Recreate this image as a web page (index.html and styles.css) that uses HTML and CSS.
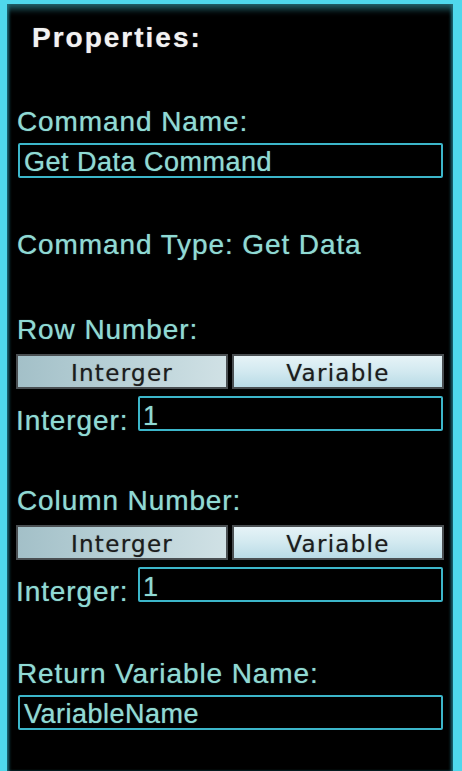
FILE: index.html
```html
<!DOCTYPE html>
<html>
<head>
<meta charset="utf-8">
<link rel="stylesheet" href="styles.css">
</head>
<body>
<div class="panel">
  <div class="title">Properties:</div>

  <div class="label l-cmdname">Command Name:</div>
  <div class="box">Get Data Command</div>

  <div class="label l-cmdtype">Command Type: Get Data</div>

  <div class="label l-section">Row Number:</div>
  <div class="toggle">
    <div class="btn btn-on">Interger</div>
    <div class="btn btn-off">Variable</div>
  </div>
  <div class="field-row">
    <div class="label field-label">Interger:</div>
    <div class="box box-small">1</div>
  </div>

  <div class="label l-section">Column Number:</div>
  <div class="toggle">
    <div class="btn btn-on">Interger</div>
    <div class="btn btn-off">Variable</div>
  </div>
  <div class="field-row">
    <div class="label field-label">Interger:</div>
    <div class="box box-small">1</div>
  </div>

  <div class="label l-return">Return Variable Name:</div>
  <div class="box">VariableName</div>
</div>
</body>
</html>
```

FILE: styles.css
```css
html, body {
  margin: 0;
  padding: 0;
  background: #000;
}

.panel {
  box-sizing: border-box;
  width: 462px;
  height: 771px;
  background: #000;
  border-top: 4px solid #4fd8ec;
  border-left: 7px solid #4fd8ec;
  border-right: 9px solid #4fd8ec;
  padding: 0 9px 0 9px;
  box-shadow:
    inset 0 10px 7px -5px rgba(40, 110, 120, 0.85),
    inset 3px 0 3px -1px rgba(30, 120, 135, 0.9),
    inset -3px 0 3px -1px rgba(30, 120, 135, 0.9);
  font-family: "Liberation Sans", Arial, sans-serif;
  overflow: hidden;
}

.title {
  margin: 18px 0 0 16px;
  font-size: 28px;
  font-weight: bold;
  line-height: 32px;
  letter-spacing: 2px;
  color: #f2f2f2;
  text-shadow: 0 0 1px rgba(255, 255, 255, 0.6);
}

.label {
  font-size: 28px;
  line-height: 30px;
  letter-spacing: 0.9px;
  color: #8fdad4;
  text-shadow: 0 0 1px rgba(143, 218, 212, 0.7);
  margin-left: 1px;
  white-space: nowrap;
}

.l-cmdname { margin-top: 53px; }
.l-cmdtype { margin-top: 52px; }
.l-section { margin-top: 55px; }
.l-return { margin-top: 57px; }

.box {
  box-sizing: border-box;
  height: 35px;
  margin: 6px 1px 0 2px;
  border: 2px solid #3cb6ca;
  border-radius: 2px;
  padding: 2px 0 0 4px;
  font-size: 27px;
  line-height: 30px;
  letter-spacing: 0.5px;
  color: #8fdad4;
  text-shadow: 0 0 1px rgba(143, 218, 212, 0.7);
  white-space: nowrap;
}

.toggle {
  display: flex;
  gap: 4px;
  margin-top: 9px;
  height: 35px;
}

.btn {
  flex: 1;
  box-sizing: border-box;
  border: 2px solid #4a4f52;
  display: flex;
  align-items: center;
  justify-content: center;
  font-family: "DejaVu Sans", Verdana, sans-serif;
  font-size: 23px;
  letter-spacing: 1.3px;
  color: #1c1c1c;
  text-shadow: 0 0 1px rgba(28, 28, 28, 0.5);
  padding-top: 2px;
}

.btn-on {
  background: linear-gradient(to right, #a3c0c8 0%, #b9d1d7 50%, #d0e1e5 100%);
}

.btn-off {
  background: linear-gradient(to bottom, #e6f3f7 0%, #d2e9f0 50%, #b9dbe6 100%);
}

.field-row {
  display: flex;
  align-items: flex-end;
  margin-top: 7px;
  gap: 12px;
}

.field-label {
  margin-left: 0;
  margin-bottom: -5px;
  width: 110px;
}

.box-small {
  flex: 1;
  margin-top: 0;
  margin-left: 0;
  padding-left: 3px;
  padding-top: 3px;
}
```
